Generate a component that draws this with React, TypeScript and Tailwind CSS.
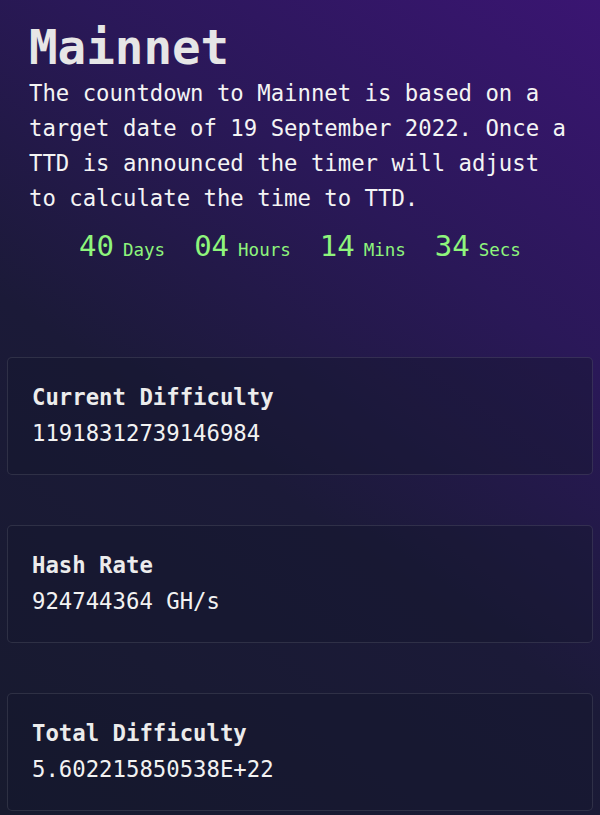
const stats = [
  { label: "Current Difficulty", value: "11918312739146984" },
  { label: "Hash Rate", value: "924744364 GH/s" },
  { label: "Total Difficulty", value: "5.602215850538E+22" },
];

const countdown = [
  { n: "40", unit: "Days" },
  { n: "04", unit: "Hours" },
  { n: "14", unit: "Mins" },
  { n: "34", unit: "Secs" },
];

export default function App() {
  return (
    <div className="min-h-[815px] bg-[linear-gradient(215deg,#3a1572_0%,#2a1858_30%,#1b1a38_58%,#171a2e_100%)] font-['DejaVu_Sans_Mono',monospace] text-[#f2f2f2]">
      <div className="px-[29px] pt-[22px]">
        <h1 className="text-[47.5px] font-bold leading-[52px] text-[#e6e6e6]">Mainnet</h1>
        <p className="mt-[2px] text-[22.3px] leading-[35px] text-[#f4f4f4]">
          The countdown to Mainnet is based on a target date of 19 September 2022. Once a TTD is
          announced the timer will adjust to calculate the time to TTD.
        </p>
        <div className="mt-[10px] flex items-baseline justify-center gap-[29px] text-[#8ef57c]">
          {countdown.map((c) => (
            <div key={c.unit} className="flex items-baseline gap-[9px]">
              <span className="text-[29px] leading-[40px]">{c.n}</span>
              <span className="text-[17.5px]">{c.unit}</span>
            </div>
          ))}
        </div>
      </div>

      <div className="mt-[91px] flex flex-col gap-[50px] px-[7px]">
        {stats.map((s) => (
          <div
            key={s.label}
            className="h-[118px] rounded-[5px] border border-white/10 bg-[#15172c]/40 px-[24px] pt-[23px]"
          >
            <div className="text-[22.3px] font-bold leading-[32px] text-[#ececec]">{s.label}</div>
            <div className="mt-[4px] text-[22.3px] leading-[32px]">{s.value}</div>
          </div>
        ))}
      </div>
    </div>
  );
}
